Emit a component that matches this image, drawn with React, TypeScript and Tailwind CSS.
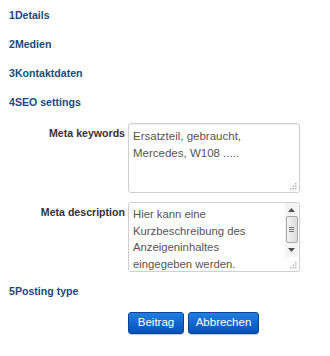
import React from "react";

const Grip = () => (
  <svg width="7" height="7" viewBox="0 0 7 7" className="block">
    <rect x="5" y="0" width="1.5" height="1.5" fill="#b5b5b5" />
    <rect x="2.5" y="2.5" width="1.5" height="1.5" fill="#b5b5b5" />
    <rect x="5" y="2.5" width="1.5" height="1.5" fill="#b5b5b5" />
    <rect x="0" y="5" width="1.5" height="1.5" fill="#b5b5b5" />
    <rect x="2.5" y="5" width="1.5" height="1.5" fill="#b5b5b5" />
    <rect x="5" y="5" width="1.5" height="1.5" fill="#b5b5b5" />
  </svg>
);

const Header = ({ n, t }: { n: string; t: string }) => (
  <div className="h-[29px] flex items-center text-[10.6px] font-bold text-[#1b4a7a]">
    {n}
    {t}
  </div>
);

export default function App() {
  return (
    <div
      className="w-[330px] h-[356px] bg-white pl-[9px] pt-[1px]"
      style={{ fontFamily: '"Liberation Sans", Arial, sans-serif' }}
    >
      <Header n="1" t="Details" />
      <Header n="2" t="Medien" />
      <Header n="3" t="Kontaktdaten" />
      <Header n="4" t="SEO settings" />
      <div className="flex flex-col gap-[9px] mt-[6px] -ml-[9px]">
        <div className="flex gap-[3px]">
          <div className="w-[125px] text-right text-[10.6px] font-bold text-[#333] pt-[3px]">
            Meta keywords
          </div>
          <div className="relative w-[172px] h-[70px] border border-[#cfcfcf] rounded-[3px] shadow-[inset_0_1px_1px_rgba(0,0,0,0.06)] pl-[4px] pt-[4px] text-[11.5px] leading-[16.5px] text-[#555]">
            Ersatzteil, gebraucht,
            <br />
            Mercedes, W108 .....
            <div className="absolute right-[2px] bottom-[2px]">
              <Grip />
            </div>
          </div>
        </div>
        <div className="flex gap-[3px]">
          <div className="w-[125px] text-right text-[10.6px] font-bold text-[#333] pt-[3px]">
            Meta description
          </div>
          <div className="relative w-[172px] h-[70px] border border-[#cfcfcf] rounded-[3px] flex">
            <div className="flex-1 pl-[4px] pt-[3px] text-[11.3px] leading-[16.5px] text-[#555]">
              Hier kann eine
              <br />
              Kurzbeschreibung des
              <br />
              Anzeigeninhaltes
              <br />
              eingegeben werden.
            </div>
            <div className="w-[14px] flex flex-col pr-[1px]">
              <div className="h-[54px] bg-[#f4f4f4] flex flex-col items-center">
                <div className="h-[13px] flex items-center justify-center">
                  <svg width="7" height="4" viewBox="0 0 7 4">
                    <path d="M0 4 L3.5 0 L7 4 Z" fill="#505050" />
                  </svg>
                </div>
                <div className="w-[12px] h-[27px] border border-[#a9a9a9] rounded-[2px] bg-gradient-to-r from-[#f2f2f2] to-[#dcdcdc] flex flex-col items-center justify-center gap-[1px]">
                  <div className="w-[5px] h-px bg-[#777]" />
                  <div className="w-[5px] h-px bg-[#777]" />
                  <div className="w-[5px] h-px bg-[#777]" />
                </div>
                <div className="h-[13px] flex items-center justify-center">
                  <svg width="7" height="4" viewBox="0 0 7 4">
                    <path d="M0 0 L7 0 L3.5 4 Z" fill="#505050" />
                  </svg>
                </div>
              </div>
            </div>
            <div className="absolute right-[2px] bottom-[2px]">
              <Grip />
            </div>
          </div>
        </div>
      </div>
      <div className="mt-[5px]">
        <Header n="5" t="Posting type" />
      </div>
      <div className="flex gap-[4px] mt-[6px] ml-[119px]">
        <button className="h-[22px] w-[56px] rounded-[3px] border border-[#0b4394] bg-gradient-to-b from-[#1f7fe3] to-[#0650bb] text-white text-[11.5px] shadow-[0_1px_1px_rgba(0,0,0,0.2)]">
          Beitrag
        </button>
        <button className="h-[22px] w-[71px] rounded-[3px] border border-[#0b4394] bg-gradient-to-b from-[#1f7fe3] to-[#0650bb] text-white text-[11.5px] shadow-[0_1px_1px_rgba(0,0,0,0.2)]">
          Abbrechen
        </button>
      </div>
    </div>
  );
}
